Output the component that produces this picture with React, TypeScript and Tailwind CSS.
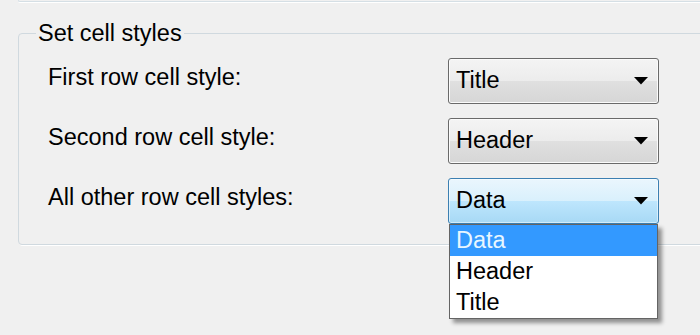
import React from 'react';

const font = { fontFamily: '"Liberation Sans", Arial, sans-serif' };

const Arrow = () => (
  <svg width="14" height="8" viewBox="0 0 14 8" className="shrink-0">
    <polygon points="0,0 14,0 7,7.5" fill="#000" />
  </svg>
);

interface ComboProps {
  value: string;
  focused?: boolean;
  open?: boolean;
  options?: string[];
}

const Combo: React.FC<ComboProps> = ({ value, focused, open, options = [] }) => (
  <div className="relative w-[211px] shrink-0">
    <div
      className={`h-[46px] rounded-[3px] border flex items-center justify-between pl-[7px] pr-[10px] ${
        focused
          ? 'border-[#3c7fb1] bg-[linear-gradient(to_bottom,#eaf6fd_0%,#d9f0fc_50%,#bee6fd_50%,#a7d9f5_100%)] shadow-[inset_0_0_0_1px_rgba(255,255,255,0.5)]'
          : 'border-[#6a6a6a] bg-[linear-gradient(to_bottom,#f4f4f4_0%,#ececec_50%,#e0e0e0_50%,#d6d6d6_100%)] shadow-[inset_0_0_0_1px_#fbfbfb]'
      }`}
    >
      <span className="text-[23.5px] leading-none text-black">{value}</span>
      <Arrow />
    </div>
    {/* dropdown list */}
    {open && (
      <div className="absolute left-[1px] top-full w-[209px] bg-white border border-[#646464] shadow-[4px_4px_4px_rgba(0,0,0,0.4)] z-10">
        {options.map(o => (
          <div
            key={o}
            className={`h-[31px] flex items-center pl-[6px] text-[23.5px] leading-none ${
              o === value ? 'bg-[#3399ff] text-[#e8f6ff]' : 'text-black'
            }`}
          >
            {o}
          </div>
        ))}
      </div>
    )}
  </div>
);

const Row: React.FC<{ label: string; children: React.ReactNode }> = ({ label, children }) => (
  <div className="flex items-center justify-between">
    <span className="text-[23.5px] leading-none text-black mb-[6px]">{label}</span>
    {children}
  </div>
);

export default function App() {
  return (
    <div className="w-[700px] h-[335px] bg-[#f0f0f0] overflow-hidden" style={font}>
      {/* bottom edge of the groupbox above */}
      <div className="h-[2px] ml-[18px] border-l border-b border-[#d5dfe5] rounded-bl-[3px] shadow-[0_1px_0_#ffffff]" />

      <fieldset className="mt-[18px] ml-[18px] w-[700px] h-[225px] border border-[#d0d9df] rounded-[4px] shadow-[1px_1px_0_#ffffff]">
        <legend className="ml-[17px] px-[2px] text-[23.5px] leading-[26px] text-black">Set cell styles</legend>
        <div className="pl-[29px] w-[640px] pt-[12px] flex flex-col gap-[14px]">
          <Row label="First row cell style:">
            <Combo value="Title" />
          </Row>
          <Row label="Second row cell style:">
            <Combo value="Header" />
          </Row>
          <Row label="All other row cell styles:">
            <Combo value="Data" focused open options={['Data', 'Header', 'Title']} />
          </Row>
        </div>
      </fieldset>
    </div>
  );
}
